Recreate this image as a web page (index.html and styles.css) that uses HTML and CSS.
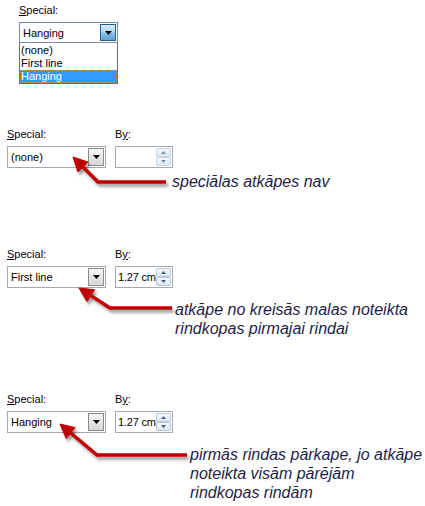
FILE: index.html
```html
<!DOCTYPE html>
<html lang="lv">
<head>
<meta charset="utf-8">
<title>Special indent</title>
<link rel="stylesheet" href="styles.css">
</head>
<body>
<div class="page">
  <section class="demo">
    <div class="label"><u>S</u>pecial:</div>
    <div class="combo combo--open">
      <span class="combo__value">Hanging</span>
      <span class="combo__btn"><svg width="7" height="4" viewBox="0 0 7 4"><path d="M0 0h7L3.5 4z" fill="#000"/></svg></span>
    </div>
    <ul class="list">
      <li class="list__item">(none)</li>
      <li class="list__item">First line</li>
      <li class="list__item list__item--sel">Hanging</li>
    </ul>
  </section>

  <section class="example ex1">
    <div class="fields">
      <div class="field field--special">
        <div class="label"><u>S</u>pecial:</div>
        <div class="combo">
          <span class="combo__value">(none)</span>
          <span class="combo__btn"><svg width="7" height="4" viewBox="0 0 7 4"><path d="M0 0h7L3.5 4z" fill="#000"/></svg></span>
        </div>
      </div>
      <div class="field">
        <div class="label">B<u>y</u>:</div>
        <div class="spin spin--disabled">
          <span class="spin__value"></span>
          <span class="spin__btns">
            <span class="spin__btn"><svg width="5" height="3" viewBox="0 0 5 3"><path d="M0 3h5L2.5 0z"/></svg></span>
            <span class="spin__btn"><svg width="5" height="3" viewBox="0 0 5 3"><path d="M0 0h5L2.5 3z"/></svg></span>
          </span>
        </div>
      </div>
    </div>
    <p class="callout">speciālas atkāpes nav</p>
  </section>

  <section class="example ex2">
    <div class="fields">
      <div class="field field--special">
        <div class="label"><u>S</u>pecial:</div>
        <div class="combo">
          <span class="combo__value">First line</span>
          <span class="combo__btn"><svg width="7" height="4" viewBox="0 0 7 4"><path d="M0 0h7L3.5 4z" fill="#000"/></svg></span>
        </div>
      </div>
      <div class="field">
        <div class="label">B<u>y</u>:</div>
        <div class="spin">
          <span class="spin__value">1.27 cm</span>
          <span class="spin__btns">
            <span class="spin__btn"><svg width="5" height="3" viewBox="0 0 5 3"><path d="M0 3h5L2.5 0z"/></svg></span>
            <span class="spin__btn"><svg width="5" height="3" viewBox="0 0 5 3"><path d="M0 0h5L2.5 3z"/></svg></span>
          </span>
        </div>
      </div>
    </div>
    <p class="callout">atkāpe no kreisās malas noteikta<br>rindkopas pirmajai rindai</p>
  </section>

  <section class="example ex3">
    <div class="fields">
      <div class="field field--special">
        <div class="label"><u>S</u>pecial:</div>
        <div class="combo">
          <span class="combo__value">Hanging</span>
          <span class="combo__btn"><svg width="7" height="4" viewBox="0 0 7 4"><path d="M0 0h7L3.5 4z" fill="#000"/></svg></span>
        </div>
      </div>
      <div class="field">
        <div class="label">B<u>y</u>:</div>
        <div class="spin">
          <span class="spin__value">1.27 cm</span>
          <span class="spin__btns">
            <span class="spin__btn"><svg width="5" height="3" viewBox="0 0 5 3"><path d="M0 3h5L2.5 0z"/></svg></span>
            <span class="spin__btn"><svg width="5" height="3" viewBox="0 0 5 3"><path d="M0 0h5L2.5 3z"/></svg></span>
          </span>
        </div>
      </div>
    </div>
    <p class="callout">pirmās rindas pārkape, jo atkāpe<br>noteikta visām pārējām<br>rindkopas rindām</p>
  </section>

  <svg class="arrows" width="425" height="506" viewBox="0 0 425 506">
    <defs>
      <filter id="shadow" x="-20%" y="-20%" width="140%" height="160%">
        <feDropShadow dx="2" dy="3" stdDeviation="1.4" flood-color="#000" flood-opacity="0.4"/>
      </filter>
    </defs>
    <g filter="url(#shadow)" fill="#c00000" stroke="#c00000">
      <path d="M166 182H98L83 167" fill="none" stroke-width="3.5"/>
      <path d="M73 157L88 162L78 172z" stroke-width="1"/>
      <path d="M172 308H110L91 295.6" fill="none" stroke-width="3.5"/>
      <path d="M79 288L94.6 289.7L87 301.5z" stroke-width="1"/>
      <path d="M187 455H97L70.7 433" fill="none" stroke-width="3.5"/>
      <path d="M60 424L75.2 427.6L66.2 438.4z" stroke-width="1"/>
    </g>
  </svg>
</div>
</body>
</html>
```

FILE: styles.css
```css
body {
  margin: 0;
  background: #fff;
  font-family: "Liberation Sans", Arial, sans-serif;
  color: #000;
}

.page {
  position: relative;
  width: 425px;
  height: 506px;
  overflow: hidden;
}

.label {
  font-size: 11px;
  line-height: 14px;
  margin-bottom: 5px;
}

.label u {
  text-underline-offset: 1px;
}

.demo {
  padding: 3px 0 0 19px;
}

.combo {
  box-sizing: border-box;
  width: 99px;
  height: 22px;
  border: 1px solid #a3a9b2;
  background: #fff;
  padding: 1px;
  display: flex;
  align-items: center;
  justify-content: space-between;
}

.combo__value {
  font-size: 11px;
  padding-left: 2px;
}

.combo__btn {
  box-sizing: border-box;
  width: 16px;
  align-self: stretch;
  border: 1px solid #8c8c8c;
  background: linear-gradient(#f6f6f6, #e6e6e6 50%, #d6d6d6);
  display: flex;
  align-items: center;
  justify-content: center;
}

.combo--open {
  height: 21px;
  border-color: #7a8ea6;
}

.combo--open .combo__btn {
  border-color: #2c5f86;
  background: linear-gradient(#d9ecfa, #b5d9f3 45%, #86bfe6 55%, #5fa3d6);
}

.list {
  box-sizing: border-box;
  width: 99px;
  margin: 0;
  padding: 0;
  list-style: none;
  border: 1px solid #6d6d6d;
  border-top: 0;
  background: #fff;
  padding-top: 1px;
}

.list__item {
  font-size: 11px;
  line-height: 13px;
  height: 13px;
  padding-left: 1px;
}

.list__item--sel {
  background: #3399ff;
  color: #fff;
  box-sizing: border-box;
  border: 1px dotted #d08a3a;
  line-height: 11px;
  padding-left: 0;
}

.example {
  padding-left: 7px;
}

.ex1 { margin-top: 43px; }
.ex2 { margin-top: 56px; }
.ex3 { margin-top: 54px; }

.fields {
  display: flex;
  gap: 9px;
}

.spin {
  box-sizing: border-box;
  width: 58px;
  height: 22px;
  border: 1px solid #a3a9b2;
  background: #fff;
  padding: 1px;
  display: flex;
}

.spin__value {
  flex: 1;
  min-width: 0;
  font-size: 11px;
  line-height: 18px;
  padding-left: 1px;
  white-space: nowrap;
  letter-spacing: -0.2px;
  overflow: hidden;
}

.spin__btns {
  flex: none;
  width: 15px;
  display: flex;
  flex-direction: column;
}

.spin__btn {
  flex: 1;
  box-sizing: border-box;
  border: 1px solid #b8c6d8;
  border-radius: 2px;
  background: linear-gradient(#f7f9fc, #dde6f1);
  display: flex;
  align-items: center;
  justify-content: center;
  fill: #3f5f8f;
}

.spin--disabled .spin__btn {
  fill: #7d93b8;
  border-color: #c9d3e0;
}

.callout {
  margin: 0;
  font-family: "Liberation Sans", Arial, sans-serif;
  font-style: italic;
  font-size: 16px;
  line-height: 19px;
  color: #1e1e48;
}

.ex1 .callout { margin: 4px 0 0 165px; }
.ex2 .callout { margin: 12px 0 0 168px; }
.ex3 .callout { margin: 12px 0 0 183px; }

.arrows {
  position: absolute;
  left: 0;
  top: 0;
  pointer-events: none;
}
```
